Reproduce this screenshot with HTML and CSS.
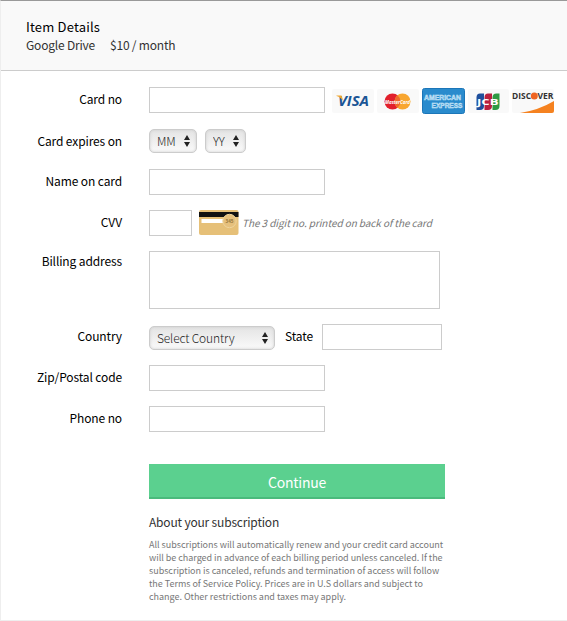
FILE: index.html
```html
<!DOCTYPE html>
<html lang="en">
<head>
  <meta charset="UTF-8">
  <meta name="viewport" content="width=device-width, initial-scale=1.0">
  <title>Item Details</title>
  <link rel="stylesheet" href="styles.css">
</head>
<body>
  <div class="page">
    <header class="item">
      <h1>Item Details</h1>
      <p><span class="item-name">Google Drive</span><span class="item-price">$10 / month</span></p>
    </header>

    <form class="payment">
      <div class="row">
        <label for="card">Card no</label>
        <input type="text" id="card" class="wide">
        <div class="cards">
          <!-- Visa -->
          <svg width="42" height="26" viewBox="0 0 42 26">
            <rect y="1" width="42" height="24" rx="2" fill="#f9f9f9"/>
            <text x="6" y="18" textLength="31" lengthAdjust="spacingAndGlyphs" class="visa">VISA</text>
            <path d="M4.500 7.500h5l1.800 5.500C9.600 10.500 7.500 9 4.500 8z" fill="#f0a52c"/>
          </svg>
          <!-- MasterCard -->
          <svg width="42" height="26" viewBox="0 0 42 26">
            <rect y="1" width="42" height="24" rx="2" fill="#f9f9f9"/>
            <circle cx="15.500" cy="13.500" r="8" fill="#e2202c"/>
            <circle cx="25.500" cy="13.500" r="8" fill="#f8a630"/>
            <path d="M20.500 7.300a8 8 0 0 1 0 12.400a8 8 0 0 1 0-12.400z" fill="#ee6a2c"/>
            <text x="8" y="15.500" textLength="25" lengthAdjust="spacingAndGlyphs" class="master">MasterCard</text>
          </svg>
          <!-- American Express -->
          <svg width="43" height="26" viewBox="0 0 43 26">
            <rect x=".5" y=".5" width="42" height="25" rx="2" fill="#2a8bcd" stroke="#1c76b8"/>
            <text x="2" y="11.800" textLength="37" lengthAdjust="spacingAndGlyphs" class="amex">AMERICAN</text>
            <text x="9.500" y="20" textLength="31" lengthAdjust="spacingAndGlyphs" class="amex">EXPRESS</text>
          </svg>
          <!-- JCB -->
          <svg width="41" height="26" viewBox="0 0 41 26">
            <rect y="1" width="41" height="24" rx="2" fill="#f9f9f9"/>
            <path d="M12 5.500h4v12.500q0 4-4 4H8.500v-12.500q0-4 3.500-4z" fill="#1f4f9c"/>
            <path d="M20 5.500h4v12.500q0 4-4 4h-3.500v-12.500q0-4 3.500-4z" fill="#b9203f"/>
            <path d="M28.500 5.500h3v12.500q0 4-4 4h-3v-12.500q0-4 4-4z" fill="#2f9a44"/>
            <text x="9" y="16.500" textLength="21.500" lengthAdjust="spacingAndGlyphs" class="jcb">JCB</text>
          </svg>
          <!-- Discover -->
          <svg width="42" height="26" viewBox="0 0 42 26">
            <rect y="1" width="42" height="24" rx="2" fill="#f9f9f9"/>
            <path d="M42 13v10q0 2-2 2H8q19-3 34-12z" fill="#f58220"/>
            <text x="0" y="11" textLength="19" lengthAdjust="spacingAndGlyphs" class="discover">DISC</text>
            <circle cx="22.300" cy="8" r="3.500" fill="#ee6423"/>
            <text x="25.500" y="11" textLength="16" lengthAdjust="spacingAndGlyphs" class="discover">VER</text>
          </svg>
        </div>
      </div>

      <div class="row expires">
        <label for="month">Card expires on</label>
        <div class="select month">
          <select id="month"><option>MM</option></select>
          <svg width="6" height="12" viewBox="0 0 6 12"><path d="M3 0l3 5H0zM3 12l3-5H0z" fill="#222"/></svg>
        </div>
        <div class="select year">
          <select id="year"><option>YY</option></select>
          <svg width="6" height="12" viewBox="0 0 6 12"><path d="M3 0l3 5H0zM3 12l3-5H0z" fill="#222"/></svg>
        </div>
      </div>

      <div class="row">
        <label for="name">Name on card</label>
        <input type="text" id="name" class="wide">
      </div>

      <div class="row">
        <label for="cvv">CVV</label>
        <input type="text" id="cvv" class="cvv">
        <svg class="card-back" width="40" height="26" viewBox="0 0 40 26">
          <rect width="39.500" height="25" rx="2" fill="#e6c078"/>
          <rect y="2" width="39.500" height="5" fill="#111"/>
          <rect x="2.500" y="9" width="24" height="4" fill="#fff"/>
          <circle cx="30.500" cy="11" r="6.700" fill="#e6c07c" stroke="#efd49c"/>
          <text x="26.500" y="13" textLength="8" lengthAdjust="spacingAndGlyphs" class="digits">345</text>
        </svg>
        <span class="hint">The 3 digit no. printed on back of the card</span>
      </div>

      <div class="row address">
        <label for="address">Billing address</label>
        <textarea id="address"></textarea>
      </div>

      <div class="row">
        <label for="country">Country</label>
        <div class="select country">
          <select id="country"><option>Select Country</option></select>
          <svg width="6" height="12" viewBox="0 0 6 12"><path d="M3 0l3 5H0zM3 12l3-5H0z" fill="#222"/></svg>
        </div>
        <label for="state" class="state-label">State</label>
        <input type="text" id="state" class="state">
      </div>

      <div class="row">
        <label for="zip">Zip/Postal code</label>
        <input type="text" id="zip" class="wide">
      </div>

      <div class="row">
        <label for="phone">Phone no</label>
        <input type="text" id="phone" class="wide">
      </div>

      <div class="bottom">
        <button type="button">Continue</button>
        <h2>About your subscription</h2>
        <p>All subscriptions will automatically renew and your credit card account<br>
          will be charged in advance of each billing period unless canceled. If the<br>
          subscription is canceled, refunds and termination of access will follow<br>
          the Terms of Service Policy. Prices are in U.S dollars and subject to<br>
          change. Other restrictions and taxes may apply.</p>
      </div>
    </form>
  </div>
</body>
</html>
```
FILE: styles.css
```css
* {
  box-sizing: border-box;
}

body {
  margin: 0;
  font-family: "Noto Sans CJK SC", "Open Sans", sans-serif;
  font-size: 12px;
  color: #111;
  background-color: #fff;
}

h1, h2, p {
  margin: 0;
  font-weight: 400;
}

.page {
  height: 621px;
  overflow: hidden;
  border-top: 1px solid #999;
  border-left: 1px solid #eee;
  border-bottom: 1px solid #eee;
}

.item {
  height: 70px;
  padding: 17px 0 0 25px;
  background-color: #f9f9f9;
  border-bottom: 1px solid #ccc;
}

.item h1 {
  font-size: 13px;
  line-height: 18px;
  letter-spacing: 0.18px;
  color: #000;
}

.item p {
  line-height: 17px;
  letter-spacing: -0.2px;
  color: #333;
}

.item-price {
  margin-left: 15px;
}

.payment {
  padding-top: 16px;
}

.row {
  display: flex;
  align-items: center;
  height: 26px;
  margin-bottom: 15px;
}

label {
  width: 121px;
  margin: -2px 27px 0 0;
  line-height: 20px;
  letter-spacing: -0.12px;
  text-align: right;
  color: #000;
}

.expires label {
  margin-top: 0;
}

input, textarea {
  height: 26px;
  margin: 0;
  padding: 0 6px;
  border: 1px solid #ccc;
  border-radius: 0;
  background-color: #fff;
  font: inherit;
}

.wide {
  width: 176px;
}

.cvv {
  width: 43px;
}

.cards {
  display: flex;
  gap: 3px;
  margin: 2px 0 0 7px;
}

.visa {
  font: italic bold 14px "Open Sans", sans-serif;
  fill: #1a5595;
}

.master {
  font: italic bold 6px "Open Sans", sans-serif;
  fill: #fff;
}

.amex {
  font: bold 7px "Liberation Sans", sans-serif;
  fill: #8cc4ea;
  stroke: #d8edfa;
  stroke-width: 0.4px;
}

.jcb {
  font: bold 8px "Open Sans", sans-serif;
  fill: #fff;
}

.discover {
  font: bold 9px "Open Sans", sans-serif;
  fill: #333;
}

.digits {
  font: bold 5px "Open Sans", sans-serif;
  fill: #9a7a3d;
}

/* selects */
.select {
  position: relative;
  height: 24px;
}

.select select {
  appearance: none;
  display: block;
  width: 100%;
  height: 24px;
  margin: 0;
  padding: 0 0 2px 7px;
  border: 1px solid #ccc;
  border-radius: 5px;
  background: linear-gradient(#e4e4e4, #fafafa);
  box-shadow: inset 0 0 3px #ccc;
  color: #222;
  font: 300 12px "Noto Sans CJK SC", "Open Sans", sans-serif;
  letter-spacing: -0.15px;
}

.select svg {
  position: absolute;
  top: 6px;
  right: 7px;
}

.month {
  width: 48px;
}

.year {
  width: 41px;
  margin-left: 8px;
}

.country {
  width: 126px;
  margin-top: 2px;
}

.card-back {
  margin-left: 7px;
}

.hint {
  margin: -1px 0 0 3px;
  font-size: 10px;
  font-style: italic;
  letter-spacing: -0.08px;
  color: #777;
}

.address {
  align-items: flex-start;
  height: 58px;
}

.address label {
  margin-top: 0;
}

textarea {
  width: 291px;
  height: 58px;
  resize: none;
}

.state-label {
  width: auto;
  margin: -2px 9px 0 10px;
}

.state {
  width: 120px;
}

.bottom {
  width: 296px;
  margin: 32px 0 0 148px;
}

button {
  display: block;
  width: 296px;
  height: 35px;
  padding: 2px 0 0;
  border: 0;
  border-bottom: 2px solid #4aba7c;
  background-color: #5bd08f;
  color: #fff;
  font: 14px "Noto Sans CJK SC", "Open Sans", sans-serif;
  letter-spacing: -0.25px;
}

.bottom h2 {
  margin-top: 13px;
  font-size: 12px;
  line-height: 20px;
  letter-spacing: -0.18px;
  color: #333;
}

.bottom p {
  margin-top: 6px;
  font-size: 9px;
  line-height: 13px;
  letter-spacing: -0.02px;
  color: #777;
  white-space: nowrap;
}
```
